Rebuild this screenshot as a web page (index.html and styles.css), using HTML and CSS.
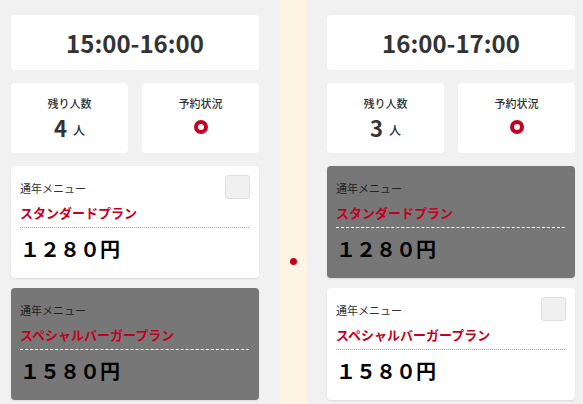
FILE: index.html
```html
<!DOCTYPE html>
<html lang="ja">
<head>
  <meta charset="UTF-8">
  <title>予約枠</title>
  <link rel="stylesheet" href="styles.css">
</head>
<body>

<div class="board">
  <section class="slot">
    <div class="time-card">15:00-16:00</div>
    <div class="stats">
      <div class="stat">
        <span class="stat-label">残り人数</span>
        <span class="stat-value">4<small>人</small></span>
      </div>
      <div class="stat">
        <span class="stat-label">予約状況</span>
        <span class="stat-value"><i class="ring"></i></span>
      </div>
    </div>
    <div class="plans">
      <div class="plan">
        <span class="check"></span>
        <p class="plan-cat">通年メニュー</p>
        <p class="plan-name">スタンダードプラン</p>
        <p class="plan-price">１２８０円</p>
      </div>
      <div class="plan plan--off">
        <p class="plan-cat">通年メニュー</p>
        <p class="plan-name">スペシャルバーガープラン</p>
        <p class="plan-price">１５８０円</p>
      </div>
    </div>
  </section>

  <div class="rail"><span class="rail-dot"></span></div>

  <section class="slot">
    <div class="time-card">16:00-17:00</div>
    <div class="stats">
      <div class="stat">
        <span class="stat-label">残り人数</span>
        <span class="stat-value">3<small>人</small></span>
      </div>
      <div class="stat">
        <span class="stat-label">予約状況</span>
        <span class="stat-value"><i class="ring"></i></span>
      </div>
    </div>
    <div class="plans">
      <div class="plan plan--off">
        <p class="plan-cat">通年メニュー</p>
        <p class="plan-name">スタンダードプラン</p>
        <p class="plan-price">１２８０円</p>
      </div>
      <div class="plan">
        <span class="check"></span>
        <p class="plan-cat">通年メニュー</p>
        <p class="plan-name">スペシャルバーガープラン</p>
        <p class="plan-price">１５８０円</p>
      </div>
    </div>
  </section>
</div>

</body>
</html>
```

FILE: styles.css
```css
body {
  margin: 0;
  background: #f1f1f1;
  font-family: "Noto Sans CJK JP", "Noto Sans", sans-serif;
  color: #333;
}
.board {
  display: flex;
  gap: 20px;
  padding: 0 8px 0 11px;
  min-height: 100vh;
  box-sizing: border-box;
}
.slot {
  width: 248px;
  flex: none;
  padding-top: 15px;
}
.rail {
  width: 28px;
  flex: none;
  background: #fdf5e2;
  display: flex;
  justify-content: center;
  padding-top: 258px;
  box-sizing: border-box;
}
.rail-dot {
  width: 7px;
  height: 7px;
  border-radius: 50%;
  background: #c40020;
}
.time-card {
  background: #fff;
  border-radius: 4px;
  height: 55px;
  display: flex;
  align-items: center;
  justify-content: center;
  font-size: 24px;
  font-weight: 700;
  color: #333;
}
.stats {
  display: grid;
  grid-template-columns: 1fr 1fr;
  gap: 14px;
  margin-top: 13px;
}
.stat {
  background: #fff;
  border-radius: 4px;
  height: 70px;
  box-sizing: border-box;
  padding-top: 12px;
  display: flex;
  flex-direction: column;
  align-items: center;
}
.stat-label {
  font-size: 11px;
  line-height: 16px;
  font-weight: 500;
}
.stat-value {
  margin-top: 4px;
  height: 24px;
  display: flex;
  align-items: center;
  font-size: 22px;
  font-weight: 700;
  line-height: 24px;
}
.stat-value small {
  font-size: 12px;
  font-weight: 500;
  margin-left: 6px;
  padding-top: 6px;
}
.ring {
  width: 14px;
  height: 14px;
  border: 4px solid #c40020;
  border-radius: 50%;
  box-sizing: border-box;
  margin-top: -1px;
}
.plans {
  margin-top: 13px;
  display: flex;
  flex-direction: column;
  gap: 10px;
}
.plan {
  position: relative;
  background: #fff;
  border-radius: 4px;
  box-shadow: 0 1px 2px rgba(0, 0, 0, 0.1);
  padding: 14px 10px 16px 9px;
}
.plan p {
  margin: 0;
}
.check {
  position: absolute;
  top: 9px;
  right: 9px;
  width: 25px;
  height: 24px;
  box-sizing: border-box;
  background: #f0f0f0;
  border: 1px solid #e0e0e0;
  border-radius: 3px;
}
.plan-cat {
  font-size: 11px;
  line-height: 16px;
  color: #333;
}
.plan-name {
  margin-top: 8px !important;
  font-size: 13px;
  line-height: 18px;
  font-weight: 700;
  color: #c40020;
  padding-bottom: 5px;
  border-bottom: 1px dotted #c4a271;
}
.plan-price {
  margin-top: 8px !important;
  font-size: 20px;
  line-height: 26px;
  font-weight: 700;
  color: #000;
}
.plan--off {
  background: #777;
}
.plan--off .plan-cat {
  color: #222;
}
.plan--off .plan-name {
  border-bottom: 1px dashed #fff;
}
```
